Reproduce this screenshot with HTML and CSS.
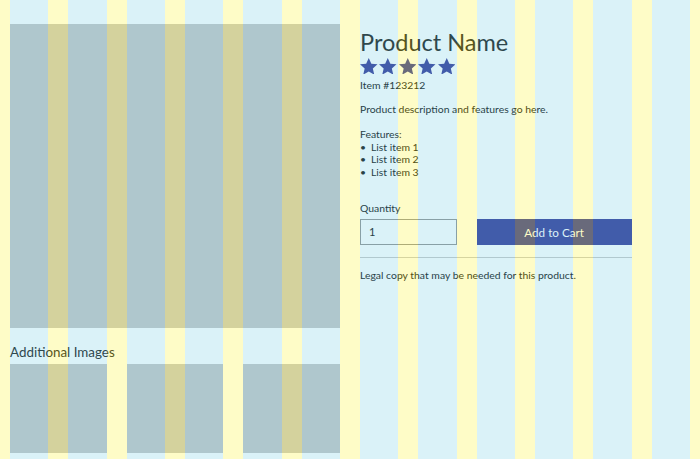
FILE: index.html
```html
<!DOCTYPE html>
<html lang="en">
<head>
<meta charset="utf-8">
<title>Product</title>
<link rel="stylesheet" href="styles.css">
</head>
<body>
<main class="page">
  <section class="gallery">
    <div class="main-image"></div>
    <h2 class="gallery-title">Additional Images</h2>
    <div class="thumbs">
      <div class="thumb"></div>
      <div class="thumb"></div>
      <div class="thumb"></div>
    </div>
  </section>
  <section class="details">
    <h1 class="title">Product Name</h1>
    <div class="stars">
      <svg class="star" viewBox="1.5 1.5 21 20"><path d="M12 1.5l3.1 6.9 7.4.7-5.6 5 1.7 7.4L12 17.6l-6.6 3.9 1.7-7.4-5.6-5 7.4-.7z"/></svg>
      <svg class="star" viewBox="1.5 1.5 21 20"><path d="M12 1.5l3.1 6.9 7.4.7-5.6 5 1.7 7.4L12 17.6l-6.6 3.9 1.7-7.4-5.6-5 7.4-.7z"/></svg>
      <svg class="star" viewBox="1.5 1.5 21 20"><path d="M12 1.5l3.1 6.9 7.4.7-5.6 5 1.7 7.4L12 17.6l-6.6 3.9 1.7-7.4-5.6-5 7.4-.7z"/></svg>
      <svg class="star" viewBox="1.5 1.5 21 20"><path d="M12 1.5l3.1 6.9 7.4.7-5.6 5 1.7 7.4L12 17.6l-6.6 3.9 1.7-7.4-5.6-5 7.4-.7z"/></svg>
      <svg class="star" viewBox="1.5 1.5 21 20"><path d="M12 1.5l3.1 6.9 7.4.7-5.6 5 1.7 7.4L12 17.6l-6.6 3.9 1.7-7.4-5.6-5 7.4-.7z"/></svg>
    </div>
    <p class="item">Item #123212</p>
    <p class="desc">Product description and features go here.</p>
    <div class="features">
      <p>Features:</p>
      <ul>
        <li>List item 1</li>
        <li>List item 2</li>
        <li>List item 3</li>
      </ul>
    </div>
    <label class="qty-label" for="qty">Quantity</label>
    <div class="buy">
      <input id="qty" class="qty" type="text" value="1">
      <button class="cart" type="button">Add to Cart</button>
    </div>
    <hr class="rule">
    <p class="legal">Legal copy that may be needed for this product.</p>
  </section>
</main>
<div class="grid-overlay" aria-hidden="true">
  <div></div><div></div><div></div><div></div><div></div><div></div>
  <div></div><div></div><div></div><div></div><div></div><div></div>
</div>
</body>
</html>
```

FILE: styles.css
```css
* { box-sizing: border-box; }
html, body { margin: 0; padding: 0; background: #fff; }
body {
  font-family: Lato, "Noto Sans", sans-serif;
  color: #222;
  font-size: 10.4px;
  line-height: 14px;
}
p, h1, h2, ul { margin: 0; padding: 0; }

.page {
  display: grid;
  grid-template-columns: repeat(12, 1fr);
  column-gap: 20px;
  padding: 24px 10px 0;
}
.gallery { grid-column: 1 / 7; }
.details { grid-column: 7 / 12; padding-top: 4px; }

.main-image { height: 304px; background: #cacaca; }
.gallery-title {
  font-weight: 400;
  font-size: 13.4px;
  line-height: 16px;
  margin-top: 16px;
  color: #2a2a2a;
}
.thumbs {
  display: grid;
  grid-template-columns: repeat(3, 1fr);
  column-gap: 20px;
  margin-top: 4px;
}
.thumb { height: 89px; background: #cacaca; }

.title {
  font-weight: 400;
  font-size: 23.5px;
  line-height: 28.7px;
  color: #2a2a2a;
}
.stars { display: flex; gap: 1.9px; margin-top: 1px; }
.star { width: 17.5px; height: 16.7px; fill: #40449e; }
.item { margin-top: 3.9px; }
.desc { margin-top: 10px; }
.features { margin-top: 12px; line-height: 12.4px; }
.features ul { list-style: none; }
.features li::before { content: "\2022"; display: inline-block; width: 11px; }
.qty-label { display: block; margin-top: 23px; }
.buy {
  display: grid;
  grid-template-columns: repeat(5, 1fr);
  column-gap: 20px;
  margin-top: 4px;
  height: 26px;
}
.qty {
  grid-column: span 2;
  font-family: inherit;
  font-size: 11px;
  color: #222;
  border: 1px solid #999;
  padding: 0 8px;
  background: transparent;
  height: 26px;
}
.cart {
  grid-column: span 3;
  border: 0;
  background: #40449e;
  color: #fff;
  font-family: inherit;
  font-size: 11.7px;
  height: 26px;
  padding: 0;
}
.rule { border: 0; border-top: 1px solid #ccc; margin: 11.7px 0 0; }
.legal { margin-top: 10px; }

.grid-overlay {
  position: fixed;
  inset: 0;
  pointer-events: none;
  display: grid;
  grid-template-columns: repeat(12, 1fr);
}
.grid-overlay div {
  border-left: 10px solid rgba(250, 241, 0, 0.22);
  border-right: 10px solid rgba(250, 241, 0, 0.22);
  background: rgba(70, 190, 220, 0.2);
  background-clip: padding-box;
}
```
